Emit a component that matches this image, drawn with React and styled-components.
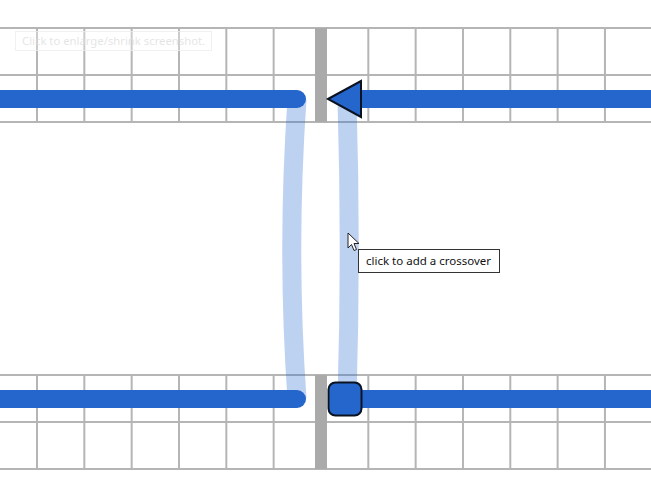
import styled, { createGlobalStyle } from "styled-components";

const Global = createGlobalStyle`
  html, body {
    margin: 0;
    padding: 0;
    background: #fff;
    overflow: hidden;
  }
`;

const Stage = styled.div`
  position: relative;
  width: 651px;
  height: 504px;
  background: #fff;
  font-family: "Noto Sans", "Open Sans", sans-serif;
`;

const Drawing = styled.svg`
  display: block;
  width: 651px;
  height: 504px;
`;

const Caption = styled.div`
  position: absolute;
  left: 15px;
  top: 31px;
  padding: 0 6px;
  height: 18px;
  line-height: 17px;
  border: 1px solid rgba(235, 235, 235, 0.7);
  background: rgba(255, 255, 255, 0.3);
  color: rgba(220, 220, 220, 0.75);
  font-size: 11.3px;
  white-space: nowrap;
`;

const Tooltip = styled.div`
  position: absolute;
  left: ${(p) => p.x}px;
  top: ${(p) => p.y}px;
  box-sizing: border-box;
  height: 24px;
  padding: 0 8px 0 7px;
  line-height: 22px;
  border: 1px solid #333;
  background: #fff;
  color: #111;
  font-size: 11.5px;
  white-space: nowrap;
`;

const Cursor = styled.svg`
  position: absolute;
  left: ${(p) => p.x}px;
  top: ${(p) => p.y}px;
`;

const STEP = 47.33;
const cols = [];
for (let x = 37; x < 651; x += STEP) {
  if (x < 300 || x > 340) cols.push(x);
}
const BLUE = "#2566cc";
const GRID = "#b5b5b5";

const Band = ({ y }) => (
  <g>
    {cols.map((x) => (
      <line
        key={x}
        x1={x}
        x2={x}
        y1={y}
        y2={y + 94}
        stroke={GRID}
        strokeWidth="2"
      />
    ))}
    {[0, 47, 94].map((d) => (
      <line
        key={d}
        x1="0"
        x2="651"
        y1={y + d}
        y2={y + d}
        stroke={GRID}
        strokeWidth="2"
      />
    ))}
    <rect x="315" y={y} width="12" height="94" fill="#aaa" />
  </g>
);

export default function App() {
  return (
    <Stage>
      <Global />
      <Drawing viewBox="0 0 651 504">
        <Band y={28} />
        <Band y={375} />

        <path
          d="M297 99 C290 200 290 300 297 399"
          fill="none"
          stroke={BLUE}
          strokeOpacity="0.3"
          strokeWidth="19"
        />
        <path
          d="M347 99 C350 200 350 300 347 399"
          fill="none"
          stroke={BLUE}
          strokeOpacity="0.3"
          strokeWidth="19"
        />

        <line x1="-20" y1="99" x2="297" y2="99" stroke={BLUE} strokeWidth="18" strokeLinecap="round" />
        <line x1="355" y1="99" x2="660" y2="99" stroke={BLUE} strokeWidth="18" />
        <line x1="-20" y1="399" x2="297" y2="399" stroke={BLUE} strokeWidth="18" strokeLinecap="round" />
        <line x1="355" y1="399" x2="660" y2="399" stroke={BLUE} strokeWidth="18" />

        <polygon
          points="328,99 361,81 361,117"
          fill={BLUE}
          stroke="#0b1220"
          strokeWidth="2"
          strokeLinejoin="miter"
        />
        <rect
          x="328.5"
          y="382.5"
          width="33"
          height="33"
          rx="7"
          fill={BLUE}
          stroke="#0b1220"
          strokeWidth="2"
        />
      </Drawing>

      <Caption>Click to enlarge/shrink screenshot.</Caption>

      <Cursor x={347} y={232} width="14" height="22" viewBox="0 0 14 22">
        <path
          d="M1 1 L1 16 L4.5 12.5 L7 18.5 L9.5 17.5 L7 11.5 L12 11.5 Z"
          fill="#fff"
          stroke="#222"
          strokeWidth="1"
          strokeLinejoin="round"
        />
      </Cursor>

      <Tooltip x={358} y={249}>click to add a crossover</Tooltip>
    </Stage>
  );
}
